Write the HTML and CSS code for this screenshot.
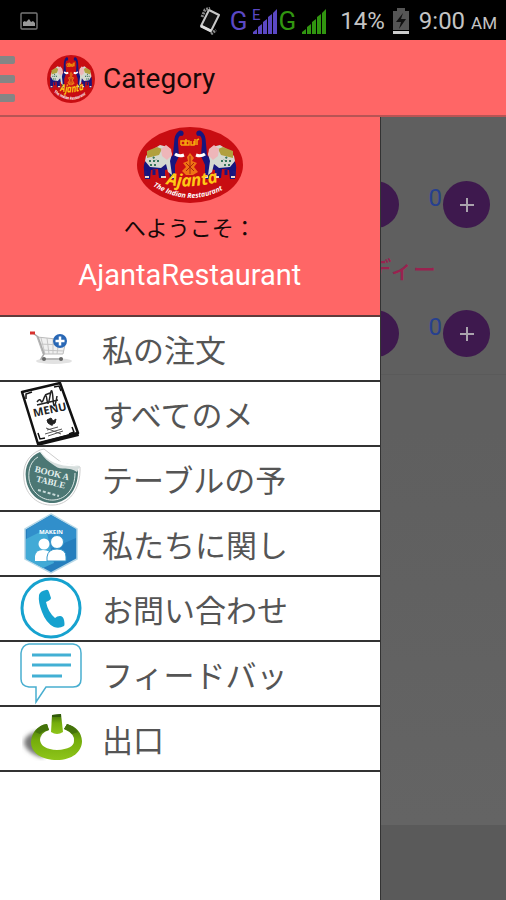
FILE: index.html
```
<!DOCTYPE html>
<html lang="ja">
<head>
<meta charset="utf-8">
<meta name="viewport" content="width=device-width, initial-scale=1">
<title>Category</title>
<link rel="stylesheet" href="styles.css">
</head>
<body>
<svg class="defs" width="0" height="0" aria-hidden="true">
  <defs>
    <g id="elephant">
      <path d="M7 43c-1-7 2-12 8-15l11-2 7 5 3-3 1-11q0-10 5-13c5-2 6 4 3 5-3-1-4 2-4 7l1 13-4 9v14h-5l-1-10-4 1v8h-6l-1-9-7 1-1 9H8z" fill="#17157e"/>
      <path d="M9 29l6-6 8-5 8 2 4 7-2 7 2 14-4-3-2-8-5 4-11-1-5-6z" fill="#d5d8d0"/>
      <path d="M10 24l10-4 5 2-3 6-12 3z" fill="#b1a03e"/>
      <path d="M24 22l5-4 5 4 1 6-5 5-5-4z" fill="#eeb6b9"/>
      <path d="M12 34h11M13 38h8M16 30l3 3" stroke="#38745a" stroke-width="2" stroke-dasharray="2 2"/>
      <path d="M38 27q4 3 9 1" stroke="#fff" stroke-width="3" fill="none"/>
      <path d="M9 44v5M17 43v5M26 42v6" stroke="#1d177e" stroke-width="3"/>
      <path d="M8 50h4M24 50h5M35 50h3" stroke="#ead8ca" stroke-width="2"/>
    </g>
    <g id="emblem">
      <ellipse cx="53" cy="38" rx="53" ry="38" fill="#c80d12"/>
      <use href="#elephant"/>
      <use href="#elephant" transform="matrix(-1 0 0 1 106 0)"/>
      <path d="M44 18v-4h4v4h-4M49 12v6h3v-4h-3M54 14v4h3v-4M58 12v6M60 18v-5l2-1" fill="none" stroke="#f5a70c" stroke-width="1.500"/>
      <path d="M53 26l4 5-2 3 5 2-3 4 4 5-5 3H49l-4-4 4-4-3-4 5-2-1-4z" fill="#ef7414"/>
      <path d="M49 36l8 8M57 36l-8 8M53 29v18" stroke="#ac240f" stroke-width="1"/>
      <path id="nameArc" d="M29 57q24 6 55-3" fill="none"/>
      <path id="tagArc" d="M16 59q38 24 76 0" fill="none"/>
      <text class="emblem-name"><textPath href="#nameArc">Ajanta</textPath></text>
      <text class="emblem-tag"><textPath href="#tagArc">The Indian Restaurant</textPath></text>
    </g>
    <path id="bars" d="M1 26v-2l4-3v5zM6 26v-7l4-3v10zM11 26V14l4-3v15zM16 26V9l4-3v20zM21 26V5l4-4v25z"/>
  </defs>
</svg>

<div class="screen">
  <div class="status">
    <svg class="status-photo" width="18" height="18" viewBox="0 0 18 18" aria-hidden="true"><rect x="1" y="1" width="16" height="16" rx="1" fill="none" stroke="#777" stroke-width="1.4"/><path d="M3 14v-4l2-1 1 1 3-3 2 3 2-1 2 2v3z" fill="#999"/></svg>
    <svg width="24" height="28" viewBox="0 0 24 28" aria-hidden="true"><path d="M11 3l10 5-8 16-10-5z" fill="#111" stroke="#c8c8c8" stroke-width="2" stroke-linejoin="round"/><path d="M3 19l10 5" stroke="#ddd" stroke-width="3"/><path d="M4 10l3-7 5-2M13 27l5-4" fill="none" stroke="#888" stroke-width="3" stroke-dasharray="2 1"/></svg>
    <div class="network network-violet">
      <span>G</span>
      <svg width="27" height="26" viewBox="0 0 27 26" aria-hidden="true"><use href="#bars"/><text class="edge" x="0" y="12">E</text></svg>
    </div>
    <div class="network network-green">
      <span>G</span>
      <svg width="27" height="26" viewBox="0 0 27 26" aria-hidden="true"><use href="#bars"/></svg>
    </div>
    <span class="charge">14%</span>
    <svg width="18" height="26" viewBox="0 0 18 26" aria-hidden="true"><path d="M5 0h8v3h4v19H1V3h4z" fill="#555"/><path d="M11 5l-7 9h5l-2 7 7-10H9z" fill="#111"/><path d="M1 23h16v3H1z" fill="#ccc"/></svg>
    <span class="clock">9:00 <small>AM</small></span>
  </div>

  <header class="appbar">
    <button class="menu-toggle" type="button" aria-label="メニュー"><span></span><span></span><span></span></button>
    <svg class="appbar-logo" viewBox="0 0 106 76" preserveAspectRatio="none" aria-hidden="true"><use href="#emblem"/></svg>
    <h1>Category</h1>
  </header>

  <div class="body">
    <nav class="drawer">
      <div class="profile">
        <svg class="profile-logo" viewBox="0 0 106 76" role="img" aria-label="Ajanta"><use href="#emblem"/></svg>
        <p class="welcome">へようこそ：</p>
        <p class="name">AjantaRestaurant</p>
      </div>
      <ul class="links">
        <li><a href="#orders">
          <svg viewBox="0 0 62 63" aria-hidden="true"><ellipse cx="34" cy="44" rx="18" ry="3" fill="#e2e2e2"/><path d="M17 20l29 3-3 14H23z" fill="#f0f0f0" stroke="#bbb"/><path d="M21 21l4 16M27 21l2 16M33 22v15M39 23l-2 14M19 27l26 1M21 33l23 1" stroke="#c5c5c5" fill="none"/><path d="M13 16l5 4 6 17-3 5h22" fill="none" stroke="#aaa" stroke-width="1.5"/><path d="M10 16h5" stroke="#d8322f" stroke-width="3"/><circle cx="24" cy="42" r="2" fill="#666"/><circle cx="41" cy="42" r="2" fill="#666"/><circle cx="40" cy="24" r="7" fill="#2867b5"/><path d="M40 19.500v9M35.500 24h9" stroke="#fff" stroke-width="2.500"/></svg>
          <span>私の注文</span></a></li>
        <li><a href="#menu">
          <svg viewBox="0 0 62 63" aria-hidden="true"><path d="M2 10L40 1l18 50-40 11z" fill="#fff" stroke="#111" stroke-width="2.500" stroke-linejoin="round"/><path d="M18 60l40-10 1 4-41 10z" fill="#111"/><path d="M6 17v-5l6-2M34 5l5-1 2 5M18 51l2 6 5-1M49 52l5-2-2-5" fill="none" stroke="#111" stroke-width="1.500"/><path d="M17 20q3-4 4-1t3-3 3 2 3-4 3 3 4-3M17 23l21-5M25 13l5-2" fill="none" stroke="#222" stroke-width="1.500"/><text class="menu-word" x="14" y="35" transform="rotate(-12 14 35)">MENU</text><path d="M27 38l4-2 2 3 3-2-1 4-4 2-3-2zM32 41v3" fill="#222" stroke="#222"/><path d="M27 48l11-3M25 52l17-5M26 46l15 6M28 54l15-5" fill="none" stroke="#555" stroke-width="1"/></svg>
          <span>すべてのメ</span></a></li>
        <li><a href="#table">
          <svg viewBox="0 0 62 63" aria-hidden="true"><path d="M20 3C8 8 2 19 4 33c2 15 14 26 29 25 15 0 28-15 27-38L42 16 24 2z" fill="#fff" stroke="#ccc"/><path d="M20 5C10 9 4 19 6 32c2 15 14 25 28 24 14-1 25-14 24-35-14 2-29-3-38-16z" fill="#4c7774"/><path d="M18 10C11 14 8 22 9 32c2 13 13 22 25 21 12-1 21-11 21-27" fill="none" stroke="#dce8e6" stroke-width="1"/><path d="M20 3c7 10 20 13 40 16l-3 6c-8-6-16-1-22-6-6-4-11-7-15-16z" fill="#d6dedd"/><path d="M20 3c8 9 20 12 39 16-16 1-31-2-39-16z" fill="#fff"/><g class="stamp" transform="rotate(14 31 30)"><text x="31" y="29">BOOK A</text><text x="32" y="38">TABLE</text></g><path d="M18 43l21 6" stroke="#c9dcda" stroke-width="2" stroke-dasharray="3 2"/></svg>
          <span>テーブルの予</span></a></li>
        <li><a href="#about">
          <svg viewBox="0 0 62 63" aria-hidden="true"><path d="M31 2l26 15v30L31 61 5 47V17z" fill="#257ebd" stroke="#b5d7e7" stroke-width="1.500"/><path d="M31 3l25 14v9L7 47V17z" fill="#318fcb"/><path d="M6 27l20-10 8 34-11 5L6 47z" fill="#42aad6"/><text class="hex-word" x="31" y="22">MAKEIN</text><g fill="#fff"><circle cx="24" cy="32" r="5.500"/><path d="M15 49v-5q1-6 8-6 7 0 9 6v5z"/><circle cx="37" cy="30" r="6.500" stroke="#3396ca"/><path d="M27 49v-4q1-8 10-8t9 8v4z" stroke="#3396ca"/></g></svg>
          <span>私たちに関し</span></a></li>
        <li><a href="#contact">
          <svg viewBox="0 0 62 63" aria-hidden="true"><circle cx="31" cy="31" r="29" fill="#fff" stroke="#16a2cf" stroke-width="3"/><path d="M19 18q1-4 7-5 2-1 3 2l2 6q0 2-5 4 2 10 9 16 2-2 5-2 3 0 4 4 1 5 0 6-5 3-10 1-8-4-12-15-4-10-3-17z" fill="#16a2cf"/></svg>
          <span>お問い合わせ</span></a></li>
        <li><a href="#feedback">
          <svg viewBox="0 0 62 63" aria-hidden="true"><path d="M9 2h44q8 1 8 9v26q0 8-8 8H26L16 60V45H9q-8-1-8-8V11q1-8 8-9z" fill="#fff" stroke="#48aed0" stroke-width="1.500"/><path d="M12 13h39M12 23h39M12 34h30" stroke="#42b0d4" stroke-width="3"/></svg>
          <span>フィードバッ</span></a></li>
        <li><a href="#exit">
          <svg viewBox="0 0 62 63" aria-hidden="true"><defs><linearGradient id="ring" x2="0" y2="1"><stop offset="0" stop-color="#3d6b0a"/><stop offset=".45" stop-color="#75ad0c"/><stop offset="1" stop-color="#8ec51a"/></linearGradient><filter id="soft"><feGaussianBlur stdDeviation="2"/></filter></defs><path d="M18 24Q4 28 4 36q2 10 20 15z" fill="#777" filter="url(#soft)"/><ellipse cx="36" cy="36" rx="18" ry="11" fill="#fff"/><path d="M27 17Q12 20 11 35c0 11 11 18 26 18s25-8 25-19q-1-13-15-17l-3 5q11 5 10 12 0 8-17 9-16-1-17-10 0-7 9-10z" fill="url(#ring)"/><path d="M27 17q-7 0-12 8l5 2q2-3 9-4zM47 17q7 2 11 8l-6 2q-3-4-8-5z" fill="#44730a"/><path d="M32 8l9-1 2 18q-6 4-12 0z" fill="url(#ring)"/><path d="M32 8l9-1v3h-9z" fill="#315a0b"/></svg>
          <span>出口</span></a></li>
      </ul>
    </nav>

    <main class="dishes">
      <section class="dish">
        <div class="stepper">
          <button type="button" aria-label="減らす"></button>
          <output>0</output>
          <button type="button" aria-label="増やす"><svg width="16" height="16" viewBox="0 0 16 16" aria-hidden="true"><path d="M8 1v14M1 8h14" stroke="#aaa3ad" stroke-width="2"/></svg></button>
        </div>
      </section>
      <section class="dish">
        <h2>ディー</h2>
        <div class="stepper">
          <button type="button" aria-label="減らす"></button>
          <output>0</output>
          <button type="button" aria-label="増やす"><svg width="16" height="16" viewBox="0 0 16 16" aria-hidden="true"><path d="M8 1v14M1 8h14" stroke="#aaa3ad" stroke-width="2"/></svg></button>
        </div>
      </section>
      <footer class="dishes-footer"></footer>
    </main>
  </div>
</div>
</body>
</html>
```
FILE: styles.css
```
* { box-sizing: border-box; }

body {
  margin: 0;
  font-family: Roboto, "Noto Sans CJK JP", sans-serif;
  background: #fff;
}

h1, h2, p, ul { margin: 0; padding: 0; font-weight: 400; }

button { border: 0; padding: 0; background: none; font: inherit; }

.defs { position: absolute; }

.screen {
  min-height: 100vh;
  display: flex;
  flex-direction: column;
}

/* status bar */
.status {
  height: 40px;
  padding: 2px 9px 0 20px;
  display: flex;
  align-items: center;
  background: #000;
  color: #c4c4c4;
  font-size: 24px;
}

.status-photo { margin-right: auto; }

.network {
  display: flex;
  align-items: center;
  margin-left: 8px;
}

.network svg { margin-left: 4px; fill: currentColor; overflow: visible; }
.network-violet { color: #5b48c4; }
.network-green { color: #319510; margin-left: 0; }
.network-green svg { margin-left: 5px; }
.network span { font-size: 26px; }
.edge { font-size: 15px; stroke: #000; stroke-width: 2px; paint-order: stroke; }
.charge { margin: 0 7px 0 12px; }
.clock { margin-left: 9px; white-space: nowrap; }
.clock small { font-size: 17px; }

/* app bar */
.appbar {
  height: 77px;
  padding-top: 2px;
  display: flex;
  align-items: center;
  background: #ff6666;
  border-bottom: 2px solid #b85454;
}

.menu-toggle {
  width: 15px;
  display: grid;
  gap: 11px;
}

.menu-toggle span {
  height: 8px;
  background: #858585;
  border-radius: 0 2px 2px 0;
}

.appbar-logo { width: 48px; height: 48px; margin: 0 8px 0 32px; }

.appbar h1 { font-size: 28px; line-height: 36px; color: #180808; }

/* body */
.body { flex: 1; display: flex; }

.drawer {
  flex: 0 0 75%;
  background: #fff;
}

.profile {
  height: 200px;
  padding-top: 10px;
  display: flex;
  flex-direction: column;
  align-items: center;
  background: #ff6666;
  border-bottom: 2px solid #5f3c3c;
}

.profile-logo { width: 106px; height: 76px; }

.welcome {
  margin-top: 8px;
  font-size: 22px;
  line-height: 36px;
  color: #180808;
}

.name {
  margin-top: 10px;
  font-size: 29px;
  line-height: 36px;
  color: #fff;
}

.links { list-style: none; }

.links a {
  height: 65px;
  padding-left: 20px;
  display: flex;
  align-items: center;
  gap: 20px;
  border-bottom: 2px solid #333;
  color: #555;
  font-family: "Noto Sans CJK JP", sans-serif;
  font-size: 31px;
  line-height: 40px;
  text-decoration: none;
}

.links svg { width: 62px; height: 63px; flex: none; }

/* dimmed list behind the drawer */
.dishes {
  flex: 1;
  min-width: 0;
  display: flex;
  flex-direction: column;
  overflow: hidden;
  background: linear-gradient(#5f5f5f, #5f5f5f 40%, #656565);
  border-left: 1px solid #333;
}

.dish {
  display: flex;
  flex-direction: column;
  align-items: flex-end;
  padding: 64px 16px 0 0;
}

.dish + .dish {
  padding: 24px 16px 17px 0;
  border-bottom: 1px solid #5a5a5a;
}

.dish h2 {
  padding-right: 54px;
  margin-bottom: 20px;
  font-size: 23px;
  font-weight: 500;
  line-height: 38px;
  white-space: nowrap;
  color: #99224f;
}

.stepper { display: flex; }

.stepper button {
  width: 47px;
  height: 47px;
  display: grid;
  place-items: center;
  flex: none;
  border-radius: 50%;
  background: #3e194e;
}

.stepper output {
  width: 44px;
  padding: 3px 1px 0 0;
  text-align: right;
  font-size: 24px;
  line-height: 28px;
  color: #26408f;
}

.dishes-footer {
  height: 75px;
  margin-top: auto;
  background: #5a5a5a;
}

/* lettering inside drawings */
.emblem-name { font: italic 700 17px "Open Sans", sans-serif; fill: #ffc915; }
.emblem-tag { font: italic 700 7px "Open Sans", sans-serif; fill: #fff; }
.menu-word { font: 700 11px "Open Sans", sans-serif; fill: #222; }
.stamp { font: 700 9px "Liberation Serif", serif; fill: #e3efed; text-anchor: middle; }
.hex-word { font: 700 6px "Open Sans", sans-serif; fill: #fff; text-anchor: middle; }
```
